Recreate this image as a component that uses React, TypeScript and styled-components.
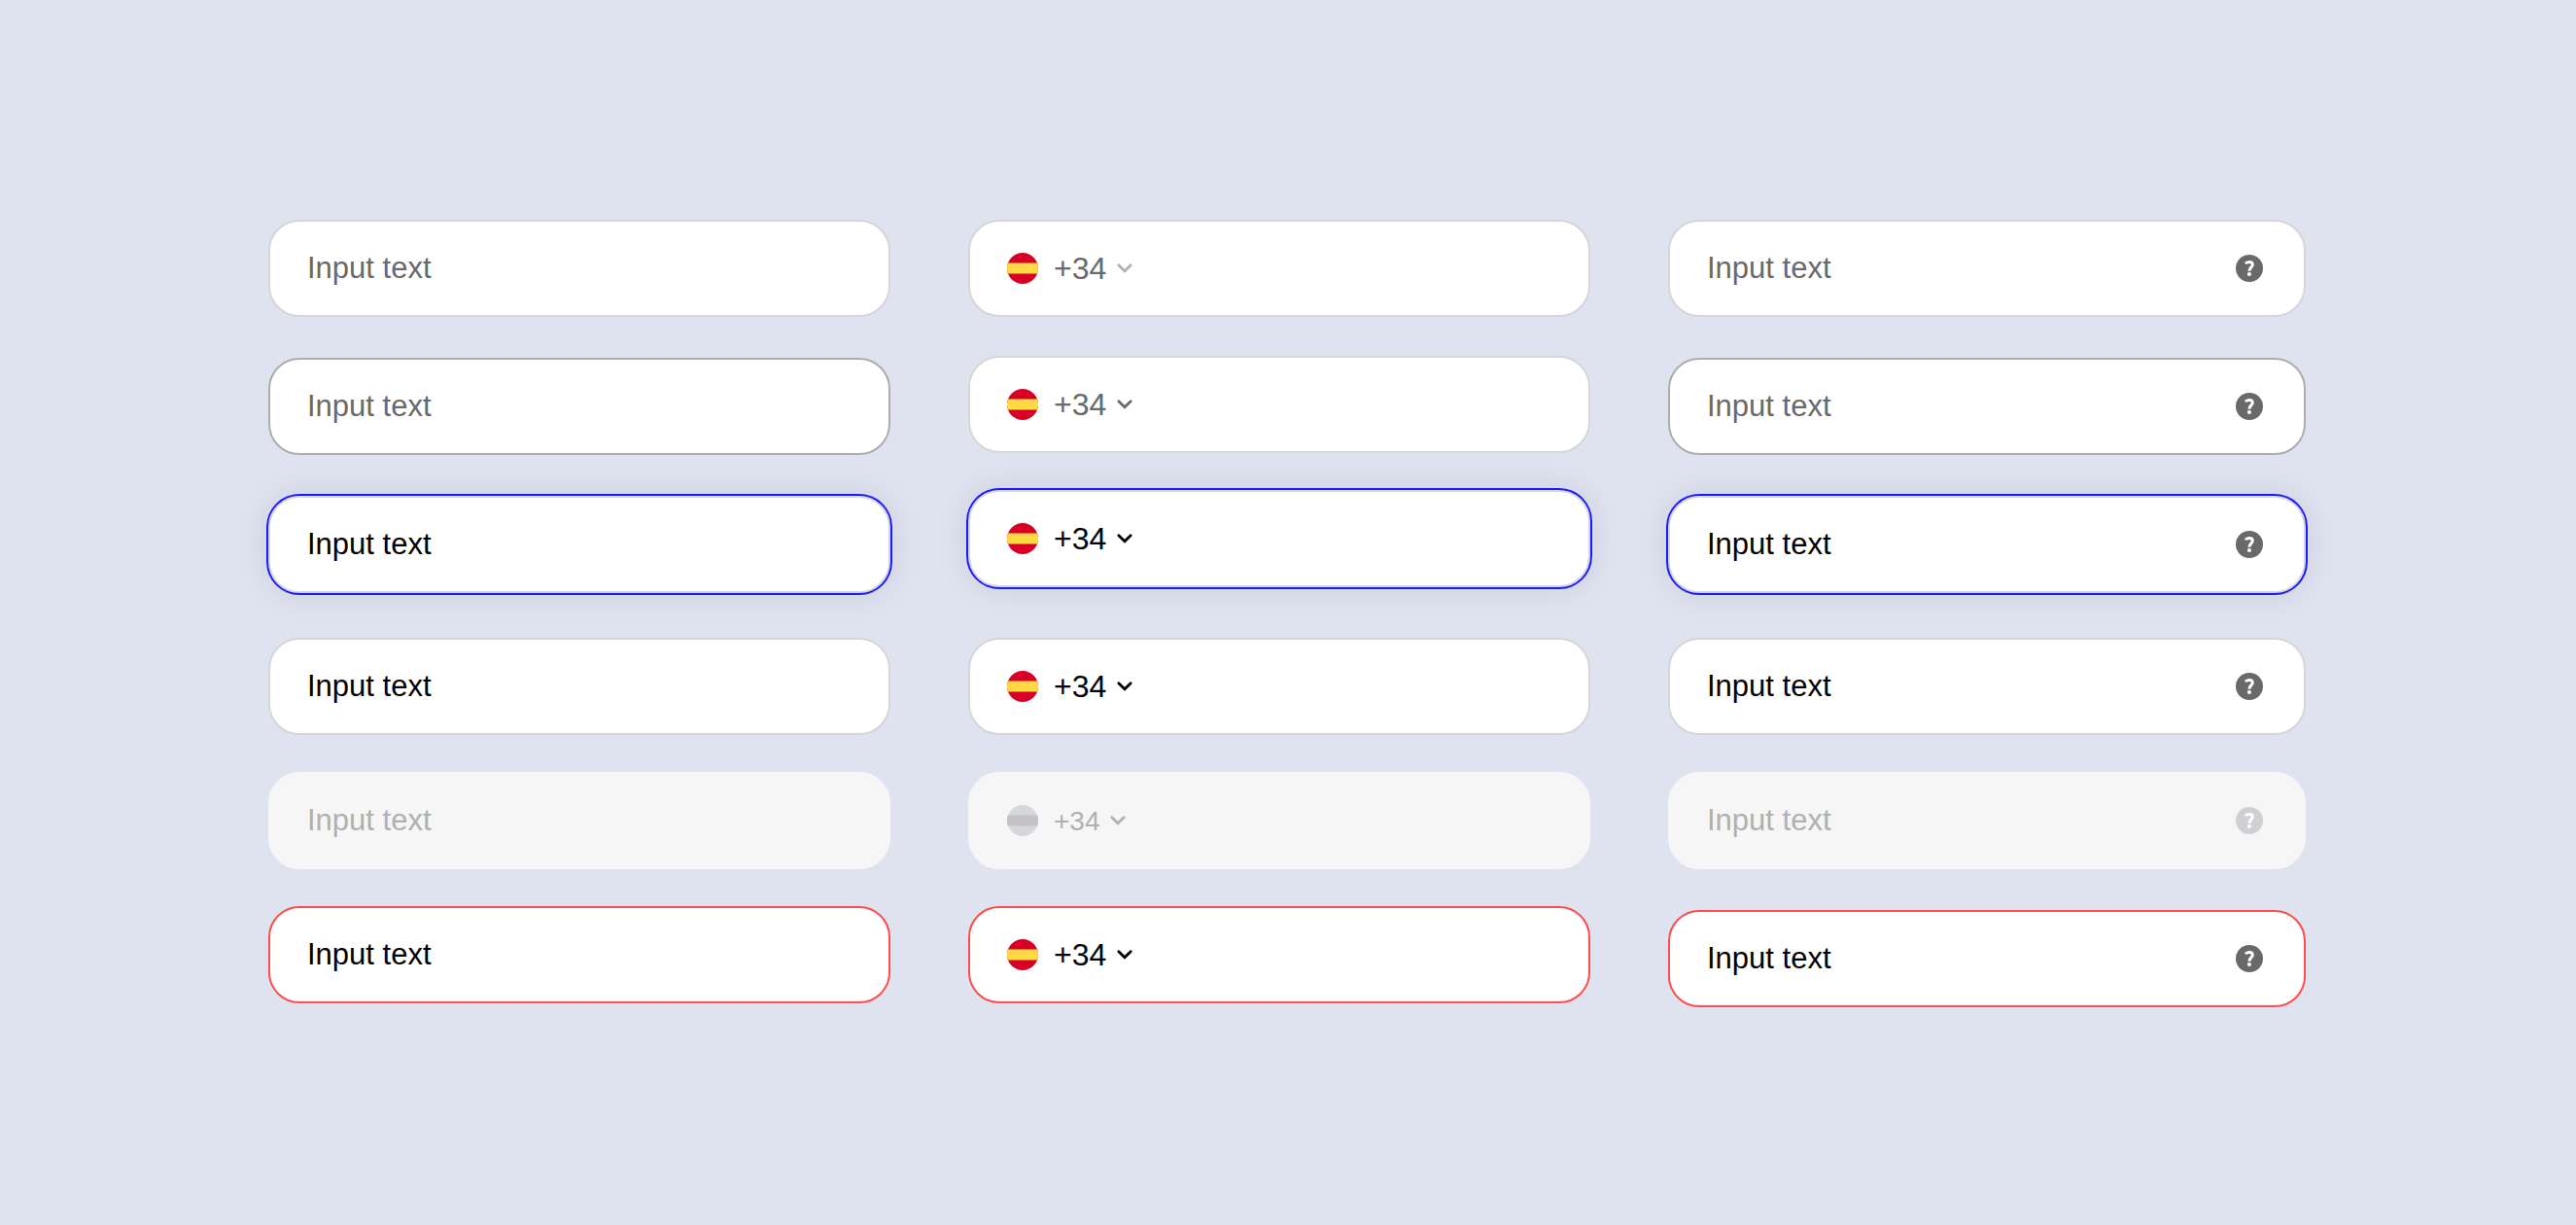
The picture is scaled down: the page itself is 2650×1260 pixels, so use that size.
import React from "react";
import styled, { createGlobalStyle, css } from "styled-components";

type State = "default" | "hover" | "focus" | "filled" | "disabled" | "error";
type Kind = "text" | "phone" | "help";

interface FieldSpec {
  state: State;
  space: number;
}

interface ColumnSpec {
  kind: Kind;
  fields: FieldSpec[];
}

const color = {
  page: "#dfe3ef",
  surface: "#ffffff",
  surfaceDisabled: "#f6f6f6",
  line: "#d6d6d9",
  lineHover: "#adadad",
  focus: "#1a1aff",
  error: "#ff4d4d",
  ink: "#000000",
  muted: "#696969",
  faint: "#b0b0b0",
};

const columns: ColumnSpec[] = [
  {
    kind: "text",
    fields: [
      { state: "default", space: 0 },
      { state: "hover", space: 42 },
      { state: "focus", space: 42 },
      { state: "filled", space: 46 },
      { state: "disabled", space: 38 },
      { state: "error", space: 38 },
    ],
  },
  {
    kind: "phone",
    fields: [
      { state: "default", space: 0 },
      { state: "hover", space: 40 },
      { state: "focus", space: 38 },
      { state: "filled", space: 52 },
      { state: "disabled", space: 38 },
      { state: "error", space: 38 },
    ],
  },
  {
    kind: "help",
    fields: [
      { state: "default", space: 0 },
      { state: "hover", space: 42 },
      { state: "focus", space: 42 },
      { state: "filled", space: 46 },
      { state: "disabled", space: 38 },
      { state: "error", space: 42 },
    ],
  },
];

const textColor = (state: State) => {
  if (state === "disabled") return color.faint;
  return state === "default" || state === "hover" ? color.muted : color.ink;
};

const borderColor = (state: State, kind: Kind) => {
  if (state === "disabled") return color.surfaceDisabled;
  if (state === "error") return color.error;
  if (state === "hover" && kind !== "phone") return color.lineHover;
  return color.line;
};

const GlobalStyle = createGlobalStyle`
  *, *::before, *::after {
    box-sizing: border-box;
  }

  body {
    margin: 0;
    background: ${color.page};
    font-family: "Liberation Sans", Arial, sans-serif;
  }
`;

const Page = styled.main`
  display: grid;
  grid-template-columns: minmax(0, 640fr) minmax(0, 640fr) minmax(0, 656fr);
  gap: 80px;
  align-items: start;
  min-height: 100vh;
  padding: 226px 278px 224px 276px;
`;

const Column = styled.section`
  display: flex;
  flex-direction: column;
`;

const Field = styled.div<{ $state: State; $kind: Kind; $space: number }>`
  display: flex;
  align-items: center;
  height: 100px;
  margin-top: ${(p) => p.$space}px;
  padding: 0 38px;
  border: 2px solid ${(p) => borderColor(p.$state, p.$kind)};
  border-radius: 32px;
  background: ${(p) => (p.$state === "disabled" ? color.surfaceDisabled : color.surface)};
  color: ${(p) => textColor(p.$state)};
  ${(p) =>
    p.$state === "focus" &&
    css`
      box-shadow: 0 0 0 2px ${color.focus}, 0 0 32px 4px rgba(0, 0, 0, 0.08);
    `}
`;

const TextInput = styled.input`
  flex: 1;
  min-width: 0;
  height: 48px;
  padding: 0;
  border: 0;
  outline: 0;
  background: transparent;
  color: inherit;
  font-family: inherit;
  font-size: 31px;

  &::placeholder {
    color: inherit;
    opacity: 1;
  }
`;

const PrefixSelect = styled.select<{ $small: boolean }>`
  appearance: none;
  height: 48px;
  margin: 0 6px 0 16px;
  padding: 0;
  border: 0;
  outline: 0;
  background: transparent;
  color: inherit;
  font-family: inherit;
  font-size: ${(p) => (p.$small ? 28 : 32)}px;
  opacity: 1;
`;

const FlagIcon = styled.svg`
  flex: none;
  width: 32px;
  height: 32px;
`;

const ChevronIcon = styled.svg<{ $faint: boolean }>`
  flex: none;
  width: 24px;
  height: 24px;
  margin-right: 16px;
  color: ${(p) => (p.$faint ? color.faint : "inherit")};
  pointer-events: none;
`;

const HelpButton = styled.button`
  flex: none;
  display: grid;
  place-items: center;
  width: 36px;
  height: 36px;
  padding: 0;
  border: 0;
  background: transparent;
  color: ${color.muted};

  &:disabled {
    color: #d1cfd4;
  }

  svg {
    width: 28px;
    height: 28px;
  }
`;

function SpainFlag({ disabled }: { disabled: boolean }) {
  return (
    <FlagIcon viewBox="0 0 32 32" aria-hidden="true">
      <circle cx="16" cy="16" r="16" fill={disabled ? "#d6d7da" : "#d80027"} />
      <path
        d="M1 10.45A16 16 0 0 0 1 21.55H31A16 16 0 0 0 31 10.45Z"
        fill={disabled ? "#c6c1c8" : "#ffda44"}
      />
    </FlagIcon>
  );
}

function Chevron({ faint }: { faint: boolean }) {
  return (
    <ChevronIcon $faint={faint} viewBox="0 0 24 24" aria-hidden="true">
      <path
        d="M5.8 8.8L12 14.8L18.2 8.8"
        fill="none"
        stroke="currentColor"
        strokeWidth="2.8"
        strokeLinecap="round"
        strokeLinejoin="miter"
      />
    </ChevronIcon>
  );
}

function Help({ disabled }: { disabled: boolean }) {
  return (
    <HelpButton type="button" aria-label="Help" disabled={disabled}>
      <svg viewBox="0 0 28 28" aria-hidden="true">
        <circle cx="14" cy="14" r="14" fill="currentColor" />
        <path
          d="M10 9.3C10.8 8 12.2 7.4 13.8 7.4C16 7.4 17.3 8.5 17.3 10.2C17.3 12.8 13.9 13 13.9 16.8"
          fill="none"
          stroke="#ffffff"
          strokeWidth="3"
        />
        <circle cx="13.9" cy="20" r="2.1" fill="#ffffff" />
      </svg>
    </HelpButton>
  );
}

function InputField({ kind, state, space }: FieldSpec & { kind: Kind }) {
  const disabled = state === "disabled";
  const empty = disabled || state === "default" || state === "hover";
  const invalid = state === "error";

  if (kind === "phone") {
    return (
      <Field $state={state} $kind={kind} $space={space}>
        <SpainFlag disabled={disabled} />
        <PrefixSelect $small={disabled} aria-label={`Country code, ${state}`} disabled={disabled}>
          <option>+34</option>
        </PrefixSelect>
        <Chevron faint={state === "default" || disabled} />
        <TextInput type="tel" aria-label={`Phone number, ${state}`} aria-invalid={invalid} disabled={disabled} />
      </Field>
    );
  }

  return (
    <Field $state={state} $kind={kind} $space={space}>
      <TextInput
        type="text"
        aria-label={`Text, ${state}`}
        aria-invalid={invalid}
        placeholder="Input text"
        defaultValue={empty ? "" : "Input text"}
        disabled={disabled}
      />
      {kind === "help" && <Help disabled={disabled} />}
    </Field>
  );
}

export default function App() {
  return (
    <>
      <GlobalStyle />
      <Page>
        {columns.map(({ kind, fields }) => (
          <Column key={kind}>
            {fields.map((field) => (
              <InputField key={field.state} kind={kind} {...field} />
            ))}
          </Column>
        ))}
      </Page>
    </>
  );
}
